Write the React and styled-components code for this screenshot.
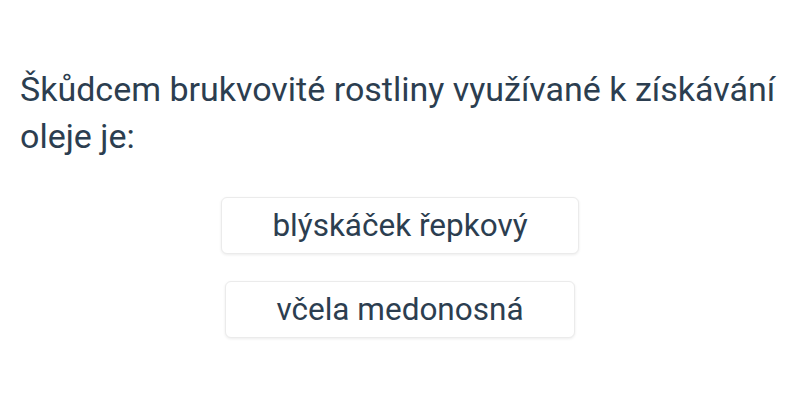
import React from 'react';
import styled, { createGlobalStyle } from 'styled-components';

const GlobalStyle = createGlobalStyle`
  html, body {
    margin: 0;
    padding: 0;
    background: #ffffff;
  }
  body {
    font-family: Roboto, "Noto Sans", sans-serif;
    color: #2c3e50;
  }
`;

const Wrapper = styled.div`
  width: 800px;
  height: 400px;
  box-sizing: border-box;
  padding: 66px 20px 0;
`;

const Question = styled.h2`
  margin: 0;
  font-size: 34px;
  font-weight: 400;
  line-height: 47px;
`;

const Answers = styled.div`
  display: flex;
  flex-direction: column;
  align-items: center;
  gap: 27px;
  margin-top: 37px;
`;

const Answer = styled.button`
  box-sizing: border-box;
  height: 57px;
  padding: 0 50px;
  font-family: inherit;
  font-size: 31.5px;
  color: #2c3e50;
  background: #ffffff;
  border: 1px solid #ebebeb;
  border-radius: 6px;
  box-shadow: 0 1px 3px rgba(0, 0, 0, 0.08);
  cursor: pointer;
`;

const answers = ['blýskáček řepkový', 'včela medonosná'];

export default function App() {
    return (
        <Wrapper>
            <GlobalStyle />
            <Question>Škůdcem brukvovité rostliny využívané k získávání oleje je:</Question>
            <Answers>
                {answers.map(a => (
                    <Answer key={a}>{a}</Answer>
                ))}
            </Answers>
        </Wrapper>
    );
}
